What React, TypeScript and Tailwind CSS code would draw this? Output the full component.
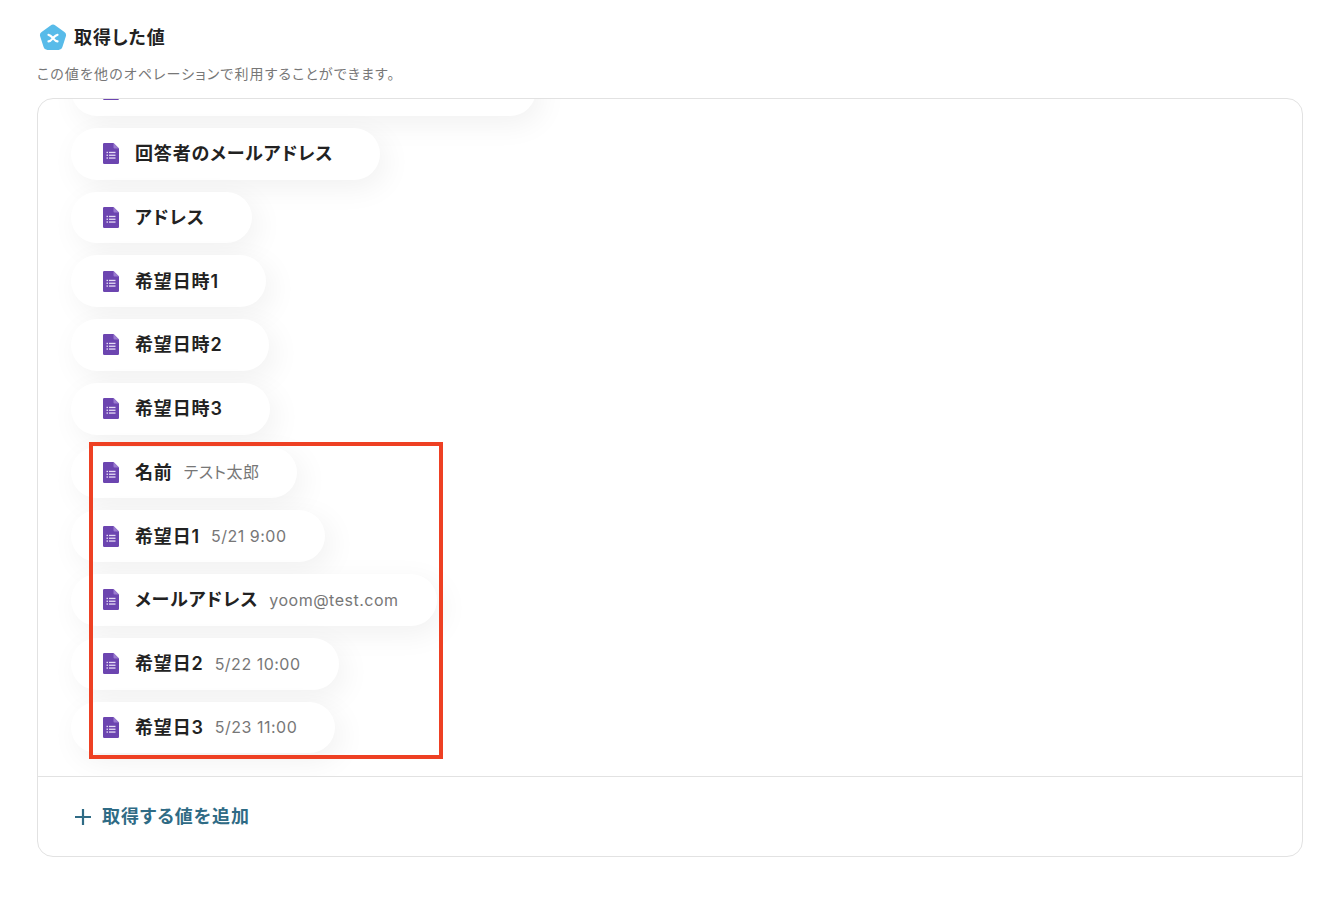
const rows = [
  { label: "回答者のメールアドレス" },
  { label: "アドレス" },
  { label: "希望日時1" },
  { label: "希望日時2" },
  { label: "希望日時3" },
  { label: "名前", value: "テスト太郎" },
  { label: "希望日1", value: "5/21 9:00" },
  { label: "メールアドレス", value: "yoom@test.com" },
  { label: "希望日2", value: "5/22 10:00" },
  { label: "希望日3", value: "5/23 11:00" },
];

function FormsIcon() {
  return (
    <svg width="16" height="21" viewBox="0 0 16 21" className="shrink-0">
      <path d="M1.2 0H10.5L16 5.5V19.8a1.2 1.2 0 0 1-1.2 1.2H1.2A1.2 1.2 0 0 1 0 19.8V1.2A1.2 1.2 0 0 1 1.2 0Z" fill="#6c45b0" />
      <path d="M10.5 0L16 5.5H11.5a1 1 0 0 1-1-1Z" fill="#9a7bcf" />
      <g fill="#e6dcf5">
        <rect x="3.5" y="8.8" width="1.5" height="1.3" />
        <rect x="6" y="8.8" width="6.5" height="1.3" />
        <rect x="3.5" y="11.6" width="1.5" height="1.3" />
        <rect x="6" y="11.6" width="6.5" height="1.3" />
        <rect x="3.5" y="14.4" width="1.5" height="1.3" />
        <rect x="6" y="14.4" width="6.5" height="1.3" />
      </g>
    </svg>
  );
}

function Pill({ label, value }: { label: string; value?: string }) {
  return (
    <div className="flex h-[51.75px] w-fit shrink-0 items-center rounded-full bg-white pl-[32px] pr-[38px] shadow-[6px_8px_30px_rgba(0,0,0,0.06)]">
      <FormsIcon />
      <span className="ml-[16px] mr-[9px] whitespace-nowrap text-[18px] font-semibold tracking-[0.85px] text-[#222222]">{label}</span>
      {value && <span className="ml-[2px] whitespace-nowrap text-[16px] tracking-[0.5px] text-[#777777]">{value}</span>}
    </div>
  );
}

export default function App() {
  return (
    <div className="relative h-[920px] w-[1330px] overflow-hidden bg-white font-['Inter','Noto_Sans_CJK_JP',sans-serif] [font-feature-settings:'palt']">
      <div className="px-[37px] pt-[24px]">
        <div className="flex h-[27px] items-center">
          <svg width="28" height="27" viewBox="0 0 28 27" className="ml-[2px] shrink-0">
            <path d="M11.6 1.4a4 4 0 0 1 4.8 0l9 6.6a4 4 0 0 1 1.4 4.5l-3.4 10.6a4 4 0 0 1-3.8 2.8H8.4a4 4 0 0 1-3.8-2.8L1.2 12.5A4 4 0 0 1 2.6 8Z" fill="#58bbe9" />
            <path d="M9.5 10.8c2.2.2 3 1.6 4.5 3.4 1.5 1.8 2.3 3 4.5 3.2M18.5 10.8c-2.2.2-3 1.6-4.5 3.4-1.5 1.8-2.3 3-4.5 3.2" fill="none" stroke="#ffffff" strokeWidth="2.2" strokeLinecap="round" />
          </svg>
          <h1 className="ml-[7px] text-[18px] font-semibold tracking-[0.9px] text-[#222222]">取得した値</h1>
        </div>
        <p className="mt-[13px] text-[14px] leading-[20px] tracking-[1.12px] text-[#777777]">
          この値を他のオペレーションで利用することができます。
        </p>
        <div className="mt-[14px] w-[1266px] overflow-hidden rounded-[16px] border border-[#e2e2e2]">
          <div className="flex h-[677px] flex-col justify-end gap-[12px] overflow-hidden pb-[22.75px] pl-[33px]">
            <div className="flex h-[51.75px] w-[465px] shrink-0 items-center rounded-full bg-white pl-[32px] shadow-[6px_8px_30px_rgba(0,0,0,0.06)]">
              <FormsIcon />
            </div>
            {rows.map((row) => (
              <Pill key={row.label} label={row.label} value={row.value} />
            ))}
          </div>
          <div className="flex h-[80px] items-center border-t border-[#e2e2e2] pl-[36px]">
            <svg width="18" height="18" viewBox="0 0 18 18" className="shrink-0">
              <path d="M9 1V17M1 9H17" stroke="#2f6b85" strokeWidth="2.2" />
            </svg>
            <span className="ml-[10px] text-[18px] font-semibold tracking-[1px] text-[#2f6b85]">取得する値を追加</span>
          </div>
        </div>
      </div>
      <div className="absolute left-[89px] top-[442px] h-[317px] w-[354px] border-[4px] border-[#ee4023]" />
    </div>
  );
}
